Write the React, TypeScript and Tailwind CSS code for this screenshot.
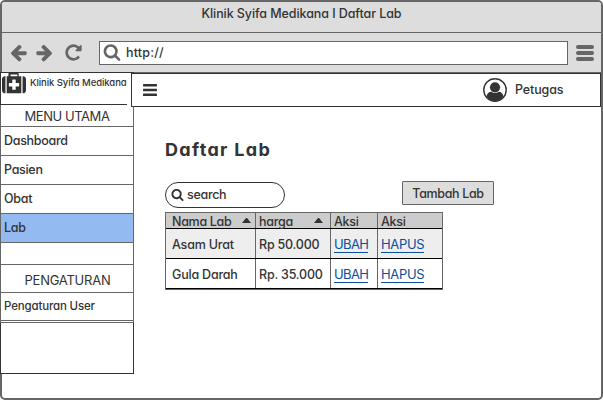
import type { ReactNode } from "react";

function Glyph({ d, size, className = "" }: { d: string; size: number; className?: string }) {
  return (
    <svg width={size} height={size} viewBox="0 0 1792 1792" fill="currentColor" className={`shrink-0 ${className}`}>
      <path d={d} />
    </svg>
  );
}

const glyphs = {
  arrowLeft:
    "M1664 896v128q0 53-32.5 90.5t-84.5 37.5h-704l293 294q38 36 38 90t-38 90l-75 76q-37 37-90 37-52 0-91-37l-651-652q-37-37-37-90 0-52 37-91l651-650q38-38 91-38 52 0 90 38l75 74q38 38 38 91t-38 91l-293 293h704q52 0 84.5 37.5t32.5 90.5z",
  reload:
    "M1664 256v448q0 26-19 45t-45 19h-448q-42 0-59-40-17-39 14-69l138-138q-148-137-349-137-104 0-198.5 40.5t-163.5 109.5-109.5 163.5-40.5 198.5 40.5 198.5 109.5 163.5 163.5 109.5 198.5 40.5q119 0 225-52t179-147q7-10 23-12 15 0 25 9l137 138q9 8 9.5 20.5t-7.5 22.5q-109 132-264 204.5t-327 72.5q-156 0-298-61t-245-164-164-245-61-298 61-298 164-245 245-164 298-61q147 0 284.5 55.5t244.5 156.5l130-129q29-31 70-14 39 17 39 59z",
  search:
    "M1216 832q0-185-131.5-316.5t-316.5-131.5-316.5 131.5-131.5 316.5 131.5 316.5 316.5 131.5 316.5-131.5 131.5-316.5zm512 832q0 52-38 90t-90 38q-54 0-90-38l-343-342q-179 124-399 124-143 0-273.5-55.5t-225-150-150-225-55.5-273.5 55.5-273.5 150-225 225-150 273.5-55.5 273.5 55.5 225 150 150 225 55.5 273.5q0 220-124 399l343 343q37 37 37 90z",
  medkit:
    "M1280 1120v-192q0-14-9-23t-23-9h-224v-224q0-14-9-23t-23-9h-192q-14 0-23 9t-9 23v224h-224q-14 0-23 9t-9 23v192q0 14 9 23t23 9h224v224q0 14 9 23t23 9h192q14 0 23-9t9-23v-224h224q14 0 23-9t9-23zm-640-736h512v-128h-512v128zm-384 0v1280h-32q-92 0-158-66t-66-158v-832q0-92 66-158t158-66h32zm1184 0v1280h-1088v-1280h128v-160q0-40 28-68t68-28h576q40 0 68 28t28 68v160h128zm352 224v832q0 92-66 158t-158 66h-32v-1280h32q92 0 158 66t66 158z",
};

function UserIcon() {
  return (
    <svg width="24" height="24" viewBox="0 0 24 24">
      <circle cx="12" cy="12" r="11.2" fill="#fff" stroke="#333" strokeWidth="1.4" />
      <path d="M3.6 18.5 C4 15.3 6 13.8 8.3 13.8 C10.5 15.4 13.5 15.4 15.7 13.8 C18 13.8 20 15.3 20.4 18.5 C18.5 21.5 15.5 23 12 23 C8.5 23 5.5 21.5 3.6 18.5 Z" fill="#333" />
      <circle cx="12" cy="9.3" r="5.1" fill="#333" />
    </svg>
  );
}

function MenuRow({ children, active = false }: { children: ReactNode; active?: boolean }) {
  return (
    <div className={`-mx-px h-[29px] border-x border-b border-[#666] pl-[3px] leading-[28px] ${active ? "bg-[#94baf2]" : ""}`}>
      {children}
    </div>
  );
}

function SortArrow() {
  return (
    <svg width="9" height="5" viewBox="0 0 9 5" className="mt-[5px]">
      <path d="M0 5 L4 0 H5 L9 5 Z" fill="#333" />
    </svg>
  );
}

const rows = [
  { name: "Asam Urat", price: "Rp 50.000", bg: "bg-[#eee]" },
  { name: "Gula Darah", price: "Rp. 35.000", bg: "bg-white" },
];

const cols = "grid grid-cols-[90px_75px_47px_64px]";

export default function App() {
  return (
    <div className="h-[400px] w-[603px] rounded-[5px] border-2 border-[#666] bg-white font-['Inter','Liberation_Sans',sans-serif] text-[12.5px] font-medium tracking-[-0.3px] text-[#333] [font-feature-settings:'cv11']">
      <div className="h-[31px] rounded-t-[3px] border-b border-[#666] bg-[#ddd] text-center leading-[23px]">
        <span className="tracking-[-0.08px]">Klinik Syifa Medikana I Daftar Lab</span>
      </div>
      <div className="flex h-10 items-start border-b border-[#666] bg-[#ddd] pt-2 pl-2">
        <div className="flex h-[22px] w-[89px] items-center text-[#666]">
          <Glyph d={glyphs.arrowLeft} size={19} className="-ml-px" />
          <Glyph d={glyphs.arrowLeft} size={19} className="ml-[7px] -scale-x-100" />
          <Glyph d={glyphs.reload} size={19} className="ml-[10px]" />
        </div>
        <div className="flex h-6 w-[469px] items-center border border-[#666] bg-white pl-[3px]">
          <Glyph d={glyphs.search} size={18} className="-mt-[3px] text-[#666]" />
          <span className="ml-[5px] tracking-[0.2px]">http://</span>
        </div>
        <div className="mt-1 ml-2 flex flex-col gap-[2px]">
          <i className="h-1 w-[18px] rounded-full bg-[#666]" />
          <i className="h-1 w-[18px] rounded-full bg-[#666]" />
          <i className="h-1 w-[18px] rounded-full bg-[#666]" />
        </div>
      </div>

      <div className="flex">
        <aside className="-mt-px -ml-0.5 h-[302px] w-[134px] shrink-0 border border-[#333] bg-white">
          <div className="flex h-8 w-[126px] border-b border-[#333]">
            <Glyph d={glyphs.medkit} size={24} className="-mt-[2px] ml-px" />
            <span className="ml-1 text-[9.5px] leading-[20px] tracking-[-0.07px] whitespace-nowrap">Klinik Syifa Medikana</span>
          </div>
          <div className="-mx-px h-[22px] border-x border-b border-[#666] text-center text-[13px] leading-[22px] font-normal tracking-[-0.45px]">MENU UTAMA</div>
          <MenuRow>Dashboard</MenuRow>
          <MenuRow>Pasien</MenuRow>
          <MenuRow>Obat</MenuRow>
          <MenuRow active>Lab</MenuRow>
          <div className="-mx-px h-[22px] border-x border-b border-[#666]" />
          <div className="-mx-px h-7 border-x border-b border-[#666] pl-px text-center text-[13px] leading-[31px] font-normal tracking-[-0.25px]">PENGATURAN</div>
          <div className="-mx-px h-7 border-x border-b border-[#666] pl-[3px] text-[11.5px] leading-[27px] tracking-[-0.16px]">Pengaturan User</div>
          <div className="-mx-px h-[2px] border-x border-b border-[#666]" />
        </aside>

        <main className="relative -ml-[3px] w-[470px] shrink-0">
          <header className="flex h-[34px] items-center border border-[#333] bg-white">
            <svg width="14" height="12" viewBox="0 0 14 12" fill="#333" className="ml-[11px]">
              <rect width="14" height="2.4" rx="0.6" />
              <rect y="4.8" width="14" height="2.4" rx="0.6" />
              <rect y="9.6" width="14" height="2.4" rx="0.6" />
            </svg>
            <div className="ml-[326px] flex items-center">
              <UserIcon />
              <span className="ml-2 tracking-[-0.12px]">Petugas</span>
            </div>
          </header>
          <div className="pt-[31px] pl-[34px]">
            <h1 className="text-[18px] leading-6 font-bold tracking-[1.3px]">Daftar Lab</h1>
            <div className="mt-[19px] flex h-[31px] w-[329px] items-start justify-between">
              <div className="mt-px flex h-[26px] w-[120px] items-center rounded-full border border-[#333] pl-[5px]">
                <Glyph d={glyphs.search} size={13} className="-mt-[2px]" />
                <span className="ml-[3px]">search</span>
              </div>
              <button className="h-6 w-[92px] rounded-[1px] border border-[#666] bg-[#ddd] leading-[21px] tracking-[-0.35px]">Tambah Lab</button>
            </div>
            <div className="w-[278px] border border-[#666]">
              <div className={`${cols} h-4 border-b border-black bg-[#ccc] leading-[15px]`}>
                <div className="flex justify-between border-r border-[#666] pr-1 pl-[6px]"><span className="h-[15px] leading-[17px]">Nama Lab</span><SortArrow /></div>
                <div className="flex justify-between border-r border-[#666] pr-[7px] pl-[3px]"><span className="h-[15px] leading-[17px]">harga</span><SortArrow /></div>
                <div className="h-[15px] border-r border-[#666] pl-[3px] leading-[17px]">Aksi</div>
                <div className="h-[15px] pl-[3px] leading-[17px]">Aksi</div>
              </div>
              {rows.map((r) => (
                <div key={r.name} className={`${cols} h-[30px] border-b border-black whitespace-nowrap ${r.bg}`}>
                  <div className="border-r border-[#666] pt-[3px] pl-[6px] leading-[26px] tracking-[-0.2px]">{r.name}</div>
                  <div className="border-r border-[#666] pt-[3px] pl-[3px] leading-[26px] tracking-[-0.2px]">{r.price}</div>
                  <div className="border-r border-[#666] pt-[2px] pl-[3px] text-[13px] leading-[27px] font-normal text-[#0b4f9c]"><a className="border-b border-[#0b4f9c] tracking-[-0.6px]">UBAH</a></div>
                  <div className="pt-[2px] pl-[3px] text-[13px] leading-[27px] font-normal text-[#0b4f9c]"><a className="border-b border-[#0b4f9c] tracking-[-0.35px]">HAPUS</a></div>
                </div>
              ))}
            </div>
          </div>
        </main>
      </div>
    </div>
  );
}
